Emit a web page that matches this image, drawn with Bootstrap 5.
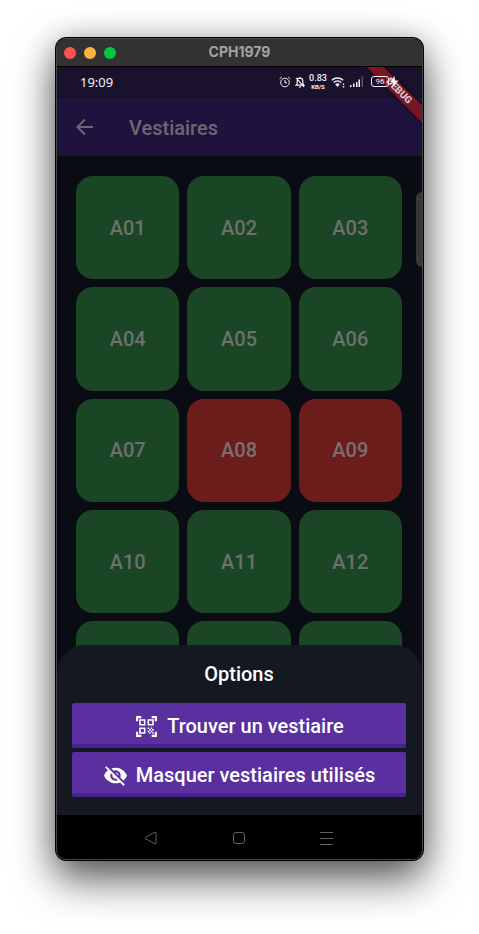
<!DOCTYPE html>
<html lang="fr">
<head>
<meta charset="utf-8">
<meta name="viewport" content="width=device-width, initial-scale=1">
<title>CPH1979</title>
<link href="https://cdn.jsdelivr.net/npm/bootstrap@5.3.0/dist/css/bootstrap.min.css" rel="stylesheet">
<style>
  body { background: #fff; font-family: Roboto, sans-serif; padding: 37px 55px 73px; }
  svg { display: block; flex: none; }
  .phone { border: 1px solid #000; border-radius: 11px; background: #000; box-shadow: 0 18px 42px rgba(0,0,0,.65), 0 0 28px rgba(0,0,0,.16); }
  .phone-frame { border: 1px solid #48484b; border-radius: 10px; }
  .window-bar { background: #323232; height: 28px; border-bottom: 1px solid #000; padding: 0 7px; }
  .window-title { font: 700 14px/16px Inter, sans-serif; color: #a3a3a3; padding-bottom: 2px; }
  .dots { gap: 8px; flex: 1 1 0; }
  .dot { width: 12px; height: 12px; border-radius: 50%; padding: 0; border: 0; }
  .dot-close { background: #ff5350; }
  .dot-min { background: #ffb03b; }
  .dot-max { background: #00c73f; }
  .status { background: #1a112c; height: 31px; padding: 0 23px 0 23px; color: #f4f2f8; }
  .status > * { z-index: 2; padding-bottom: 2px; }
  .clock { font: 400 13px/16px "Noto Sans", sans-serif; }
  .rate { font: 500 9px/9px Roboto, sans-serif; width: 18px; }
  .rate-unit { font-size: 6px; line-height: 7px; font-weight: 700; }
  .battery { border: 1px solid #f4f2f8; border-radius: 3px; width: 18px; height: 11px; font: 400 8px/8px Roboto, sans-serif; }
  .ribbon { right: -22px; top: 18px; width: 90px; height: 12px; background: #771722; transform: rotate(45deg); font: 900 10px/12px Roboto, sans-serif; color: #d3c3c8; box-shadow: 0 0 5px rgba(0,0,0,.5); z-index: 1; }
  .app-bar { background: #1f133d; height: 58px; padding: 0 18px; gap: 34px; color: #6c6871; box-shadow: 0 1px 3px #000; }
  .app-title { font-size: 20px; line-height: 24px; font-weight: 500; padding-top: 2px; }
  .lockers { background: #090c12; padding: 20px 20px 0 19px; }
  .locker-grid { display: grid; grid-template-columns: repeat(3, 1fr); gap: 8px; }
  .locker { aspect-ratio: 1; border: 0; border-radius: 17px; background: #1b4626; color: #6c716d; font-size: 20px; line-height: 24px; font-weight: 500; }
  .locker-used { background: #6b1d1b; color: #7b706f; }
  .locker-peek { height: 54px; border-radius: 17px 17px 0 0; background: #1b4626; }
  .side-handle { right: 0; top: 36px; width: 6px; height: 75px; border-radius: 6px 0 0 6px; background: #36373b; }
  .sheet { background: #131821; border-radius: 28px 28px 0 0; margin-top: -30px; padding: 17px 16px 18px 15px; }
  .sheet-title { font-size: 20px; line-height: 24px; font-weight: 500; margin: 0 0 17px; }
  .action { background: #5a30a1; border: 0; border-bottom: 4px solid #45248f; border-radius: 2px; height: 45px; color: #fff; font-size: 20px; line-height: 24px; font-weight: 500; padding: 5px 0 0; }
  .system-nav { height: 44px; gap: 74px; padding: 2px 2px 0 0; border-radius: 0 0 9px 9px; color: #626262; }
  .plain { background: none; border: 0; padding: 0; color: inherit; }
</style>
<script src="https://cdn.jsdelivr.net/npm/bootstrap@5.3.0/dist/js/bootstrap.bundle.min.js"></script>
</head>
<body>
<div class="phone">
<div class="phone-frame overflow-hidden">
  <header class="window-bar d-flex align-items-center">
    <div class="dots d-flex">
      <button class="dot dot-close" type="button" aria-label="Fermer"></button>
      <button class="dot dot-min" type="button" aria-label="Réduire"></button>
      <button class="dot dot-max" type="button" aria-label="Agrandir"></button>
    </div>
    <div class="window-title">CPH1979</div>
    <div class="dots"></div>
  </header>

  <div class="position-relative overflow-hidden">
    <div class="ribbon position-absolute text-center">DEBUG</div>
    <div class="status d-flex align-items-center justify-content-between">
      <span class="clock">19:09</span>
      <div class="d-flex align-items-center">
        <svg class="me-1" width="12" height="12" viewBox="0 0 12 12" fill="none" stroke="currentColor"><circle cx="6" cy="6.5" r="4.300"/><path d="M6 4v2.800h2M.7 2.800 2.800 1M11.300 2.800 9.200 1"/></svg>
        <svg class="me-1" width="10" height="12" viewBox="0 0 10 12" fill="none" stroke="currentColor" stroke-width="1.200"><path d="M1 9.200h8L7.800 7.500V5A2.800 2.800 0 0 0 2.200 5v2.500zM4 10.800h2M5 1v1.200M1 1.800l8 9"/></svg>
        <div class="rate text-center me-1"><div>0.83</div><div class="rate-unit">KB/S</div></div>
        <svg class="me-1" width="15" height="12" viewBox="0 0 15 12" fill="none" stroke="currentColor" stroke-width="1.400"><path d="M.8 4.200a8.500 8.500 0 0 1 11.400 0M2.700 6.500a5.600 5.600 0 0 1 7.600 0"/><path d="M4.200 8.300a3.400 3.400 0 0 1 4.600 0L6.500 11z" fill="currentColor" stroke="none"/><path d="M12.500 7.500v4" stroke-dasharray="1.500 1"/></svg>
        <svg class="me-2" width="13" height="11" viewBox="0 0 13 11" fill="currentColor"><path d="M0 9h1.500v2H0zM3 7.500h1.500V11H3zM6 6h1.500v5H6zM8.500 3.500H10V11H8.500z"/><path opacity=".3" d="M11.500.5H13V11h-1.500z"/></svg>
        <div class="battery d-flex align-items-center justify-content-center">96</div>
        <svg width="10" height="11" viewBox="0 0 10 11" fill="currentColor"><path d="M5.500 0 1 6h3L3.500 11 9.500 4.500H6z"/></svg>
      </div>
    </div>
    <nav class="app-bar d-flex align-items-center position-relative">
      <button class="plain" type="button" aria-label="Retour">
        <svg width="20" height="20" viewBox="0 0 20 20" fill="none" stroke="currentColor" stroke-width="2"><path d="M18 10H3M10 2.500 2.500 10l7.500 7.500"/></svg>
      </button>
      <h1 class="app-title m-0">Vestiaires</h1>
    </nav>
  </div>

  <main class="lockers position-relative">
    <div class="side-handle position-absolute"></div>
    <div class="locker-grid">
      <button class="locker" type="button">A01</button>
      <button class="locker" type="button">A02</button>
      <button class="locker" type="button">A03</button>
      <button class="locker" type="button">A04</button>
      <button class="locker" type="button">A05</button>
      <button class="locker" type="button">A06</button>
      <button class="locker" type="button">A07</button>
      <button class="locker locker-used" type="button">A08</button>
      <button class="locker locker-used" type="button">A09</button>
      <button class="locker" type="button">A10</button>
      <button class="locker" type="button">A11</button>
      <button class="locker" type="button">A12</button>
      <div class="locker-peek"></div>
      <div class="locker-peek"></div>
      <div class="locker-peek"></div>
    </div>
  </main>

  <section class="sheet position-relative text-white">
    <h2 class="sheet-title text-center">Options</h2>
    <div class="d-grid gap-1">
      <button class="action d-flex align-items-center justify-content-center gap-2" type="button">
        <svg width="25" height="25" viewBox="0 0 24 24" fill="currentColor"><path d="M9.500 6.500v3h-3v-3h3M11 5H5v6h6V5zm-1.500 9.500v3h-3v-3h3M11 13H5v6h6v-6zm6.500-6.500v3h-3v-3h3M19 5h-6v6h6V5zm-6 8h1.500v1.500H13V13zm1.500 1.500H16V16h-1.500v-1.500zM16 13h1.500v1.500H16V13zm-3 3h1.500v1.500H13V16zm1.500 1.500H16V19h-1.500v-1.500zM16 16h1.500v1.500H16V16zm1.500-1.500H19V16h-1.500v-1.500zm0 3H19V19h-1.500v-1.500zM22 7h-2V4h-3V2h5v5zm0 15v-5h-2v3h-3v2h5zM2 22h5v-2H4v-3H2v5zM2 2v5h2V4h3V2H2z"/></svg>
        <span>Trouver un vestiaire</span>
      </button>
      <button class="action d-flex align-items-center justify-content-center gap-2" type="button">
        <svg width="25" height="25" viewBox="0 0 24 24" fill="currentColor"><path d="M12 7c2.760 0 5 2.240 5 5 0 .65-.13 1.260-.36 1.830l2.920 2.920c1.510-1.260 2.700-2.890 3.430-4.750-1.730-4.390-6-7.500-11-7.500-1.400 0-2.740.25-3.980.7l2.160 2.160C10.740 7.130 11.350 7 12 7zM2 4.270l2.280 2.280.46.46C3.080 8.300 1.780 10.020 1 12c1.730 4.390 6 7.500 11 7.500 1.550 0 3.030-.3 4.380-.84l.42.42L19.730 22 21 20.730 3.270 3 2 4.270zM7.530 9.800l1.550 1.550c-.05.21-.08.43-.08.65 0 1.660 1.340 3 3 3 .22 0 .44-.03.65-.08l1.550 1.550c-.67.33-1.410.53-2.200.53-2.760 0-5-2.240-5-5 0-.79.2-1.530.53-2.200zm4.310-.78 3.150 3.150.02-.16c0-1.660-1.340-3-3-3l-.17.01z"/></svg>
        <span>Masquer vestiaires utilisés</span>
      </button>
    </div>
  </section>

  <footer class="system-nav d-flex align-items-center justify-content-center">
    <button class="plain" type="button" aria-label="Précédent"><svg width="14" height="14" viewBox="0 0 14 14" fill="none" stroke="currentColor" stroke-linejoin="round"><path d="M12 1.500v11q0 .7-.8.4L1.500 7.700q-.8-.7 0-1.400L11.200 1.100q.8-.3.8.4z"/></svg></button>
    <button class="plain" type="button" aria-label="Accueil"><svg width="14" height="14" viewBox="0 0 14 14" fill="none" stroke="currentColor"><rect x="1.500" y="1.500" width="11" height="11" rx="2.500"/></svg></button>
    <button class="plain" type="button" aria-label="Menu"><svg width="14" height="14" viewBox="0 0 14 14" fill="none" stroke="currentColor"><path d="M0 1.500h13M0 7.500h13M0 13.500h13"/></svg></button>
  </footer>
</div>
</div>
</body>
</html>
